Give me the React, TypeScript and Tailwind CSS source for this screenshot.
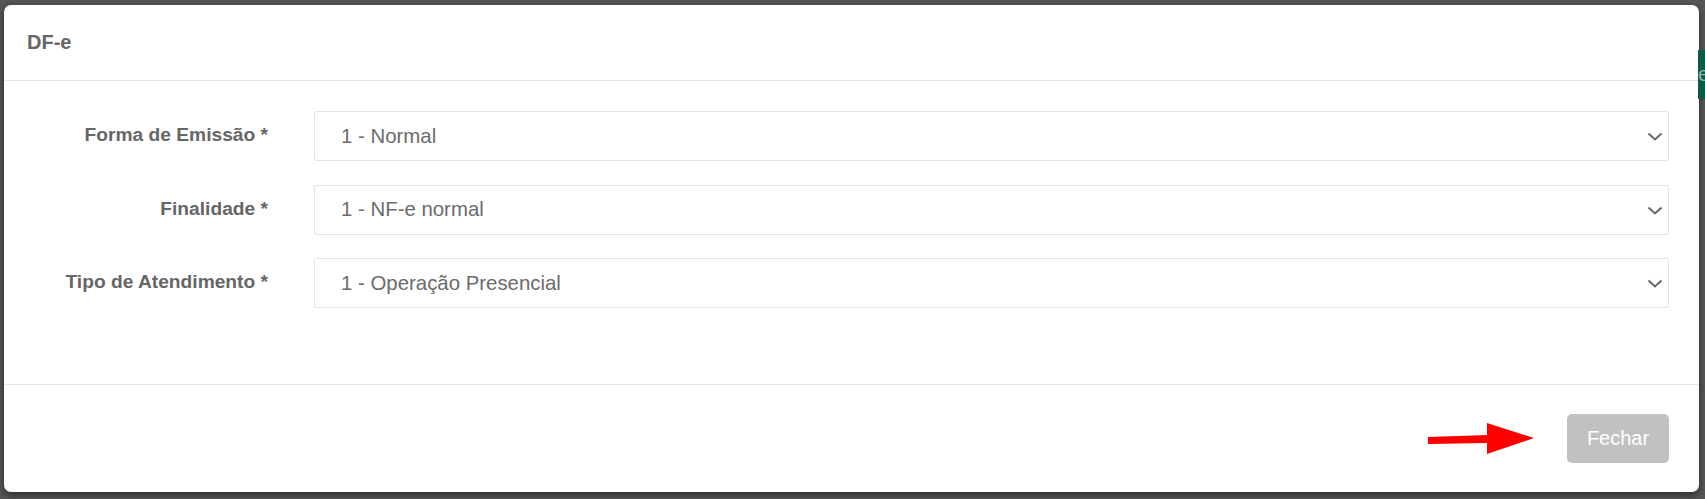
import React from "react";

const fields = [
  { label: "Forma de Emissão *", value: "1 - Normal" },
  { label: "Finalidade *", value: "1 - NF-e normal" },
  { label: "Tipo de Atendimento *", value: "1 - Operação Presencial" },
];

function Chevron() {
  return (
    <svg className="w-4 h-4 shrink-0" viewBox="0 0 16 16" fill="none">
      <path d="M1.5 5.5l6.5 6 6.5-6" stroke="#666" strokeWidth="2" />
    </svg>
  );
}

function SelectRow({ label, value }: { label: string; value: string }) {
  return (
    <div className="flex items-start">
      <label className="w-[234px] shrink-0 pt-[12px] text-right text-[19.2px] leading-[23px] font-bold text-[#666]">
        {label}
      </label>
      <div className="ml-[46px] flex-1 h-[50px] flex items-center justify-between border border-[#e3e3e3] rounded-[2px] pl-[26px] pr-[5px] bg-white">
        <span className="text-[20.4px] leading-[23px] text-[#6b6b6b]">{value}</span>
        <Chevron />
      </div>
    </div>
  );
}

export default function App() {
  return (
    <div className="h-[499px] w-full bg-[#575757] flex font-['Liberation_Sans',Arial,sans-serif] overflow-hidden">
      <div className="pt-[5px] pl-[4px]">
        <div className="w-[1695px] h-[487px] bg-white rounded-[7px] shadow-[0_3px_8px_rgba(0,0,0,0.55)] flex flex-col">
          <div className="h-[76px] border-b border-[#e5e5e5] pl-[23px] pt-[26px] shrink-0">
            <h5 className="text-[20px] leading-[23px] font-bold text-[#666]">DF-e</h5>
          </div>
          <div className="h-[304px] border-b border-[#e5e5e5] pt-[30px] pl-[30px] pr-[30px] flex flex-col gap-[23.5px] shrink-0">
            {fields.map((f) => (
              <SelectRow key={f.label} label={f.label} value={f.value} />
            ))}
          </div>
          <div className="flex-1 flex items-center justify-end pr-[30px]">
            <svg width="106" height="32" viewBox="0 0 106 32" className="shrink-0">
              <polygon points="0,14 59,12 59,0 106,15 59,31 59,20 0,21" fill="#ff0000" />
            </svg>
            <button className="ml-[33px] w-[102px] h-[49px] rounded-[5px] bg-[#c1c1c1] text-white text-[20px] leading-[23px]">
              Fechar
            </button>
          </div>
        </div>
      </div>
      <div className="flex-1 pt-[50px]">
        <div className="h-[49px] bg-[#0d5a45] overflow-hidden text-[#9aa] text-[20px] leading-[49px] -ml-[1px]">e</div>
      </div>
    </div>
  );
}
